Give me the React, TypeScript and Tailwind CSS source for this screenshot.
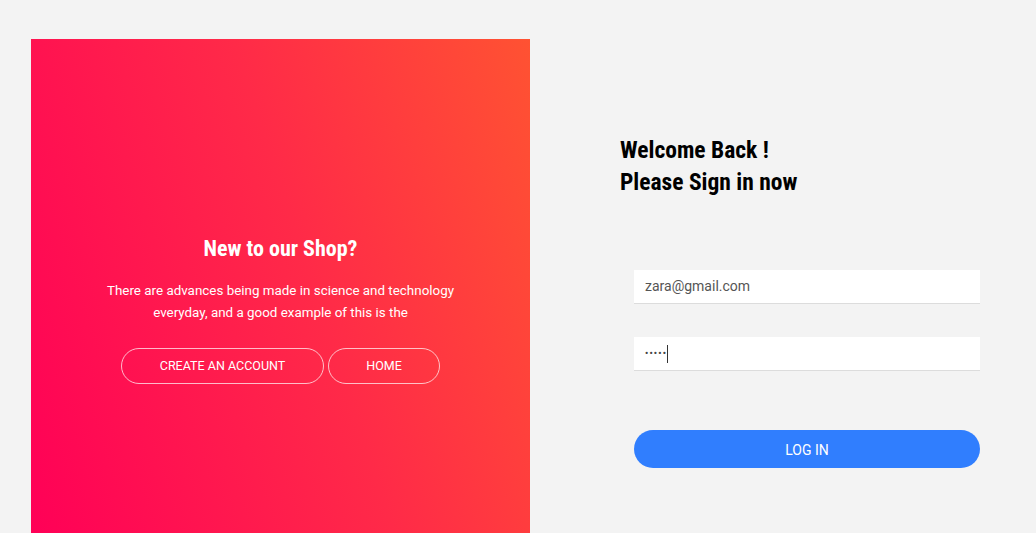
import React from "react";

export default function App() {
  return (
    <div className="w-[1036px] h-[533px] overflow-hidden bg-[#f3f3f3] flex" style={{ fontFamily: "Roboto, 'Liberation Sans', sans-serif" }}>
      <div className="ml-[31px] mt-[39px] w-[499px] h-[494px] shrink-0 bg-[linear-gradient(72deg,#ff0057_0%,#ff2a48_55%,#ff5232_100%)] flex flex-col items-center pt-[196px] text-white">
        <h2 className="text-[22px] leading-[28px] font-bold [font-stretch:condensed]" style={{ fontFamily: "'Roboto Condensed', Roboto, sans-serif" }}>New to our Shop?</h2>
        <p className="mt-[17px] text-[13.4px] leading-[22px] text-center w-[380px]">
          There are advances being made in science and technology everyday, and a good example of this is the
        </p>
        <div className="mt-[24px] flex gap-[4px]">
          <button className="w-[203px] h-[36px] rounded-full border border-white/70 text-[12.5px] uppercase">Create an Account</button>
          <button className="w-[112px] h-[36px] rounded-full border border-white/70 text-[12.5px] uppercase">Home</button>
        </div>
      </div>
      <div className="ml-[90px] pt-[134px] flex flex-col">
        <h1 className="text-[23.5px] leading-[32px] font-bold text-black [font-stretch:condensed]" style={{ fontFamily: "'Roboto Condensed', Roboto, sans-serif" }}>
          Welcome Back !<br />Please Sign in now
        </h1>
        <div className="ml-[14px] mt-[72px] w-[346px] flex flex-col">
          <div className="h-[34px] bg-white border-b border-[#dcdcdc] flex items-center pl-[11px] text-[14px] text-[#555]">zara@gmail.com</div>
          <div className="mt-[33px] h-[34px] bg-white border-b border-[#dcdcdc] flex items-center pl-[11px] text-[14px] text-[#444]">
            <span className="text-[9px] font-bold tracking-[1.2px] leading-none">•••••</span>
            <span className="w-px h-[18px] bg-[#333]" />
          </div>
          <button className="mt-[59px] h-[38px] rounded-full bg-[#307efe] text-white text-[14px] uppercase pt-[2px]">Log in</button>
        </div>
      </div>
    </div>
  );
}
